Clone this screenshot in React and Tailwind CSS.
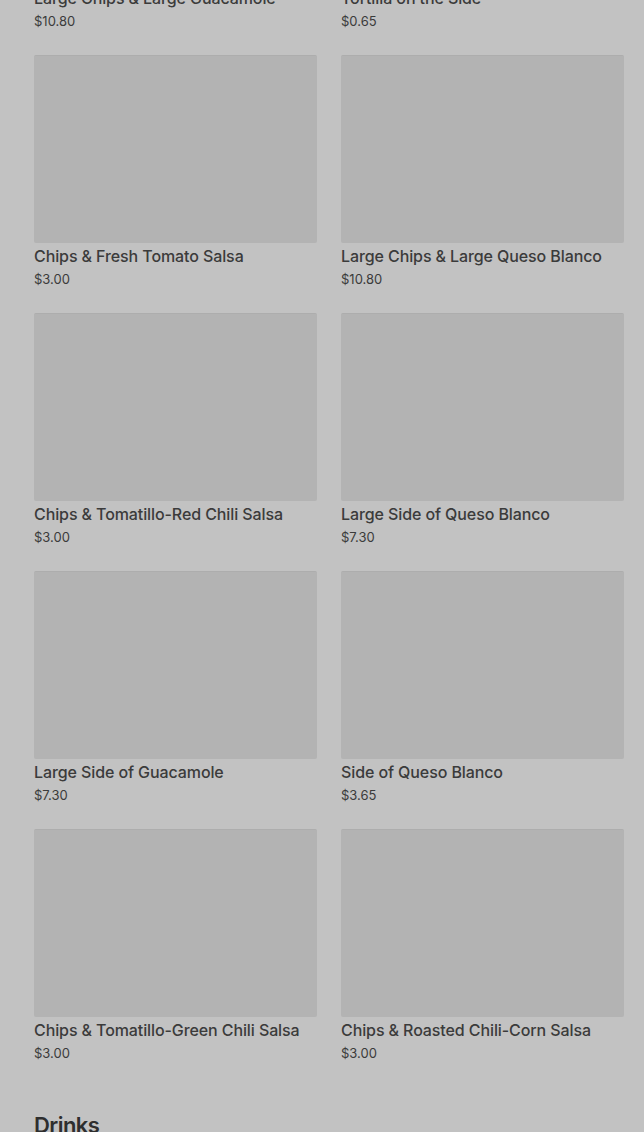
const items = [
  { name: "Large Chips & Large Guacamole", price: "$10.80" },
  { name: "Tortilla on the Side", price: "$0.65" },
  { name: "Chips & Fresh Tomato Salsa", price: "$3.00" },
  { name: "Large Chips & Large Queso Blanco", price: "$10.80" },
  { name: "Chips & Tomatillo-Red Chili Salsa", price: "$3.00" },
  { name: "Large Side of Queso Blanco", price: "$7.30" },
  { name: "Large Side of Guacamole", price: "$7.30" },
  { name: "Side of Queso Blanco", price: "$3.65" },
  { name: "Chips & Tomatillo-Green Chili Salsa", price: "$3.00" },
  { name: "Chips & Roasted Chili-Corn Salsa", price: "$3.00" },
];

function MenuItem({ name, price }) {
  return (
    <div className="flex flex-col">
      <div className="h-[188px] bg-[#b3b3b3] rounded-[2px] border-t border-[#adadad]" />
      <div className="mt-px text-[16px] leading-6 font-medium tracking-[-0.1px] text-[#3b3b3b] whitespace-nowrap">
        {name}
      </div>
      <div className="text-[13px] leading-[22px] text-[#3b3b3b]">{price}</div>
    </div>
  );
}

export default function App() {
  return (
    <div className="h-[1132px] bg-[#c2c2c2] overflow-hidden font-['Inter',sans-serif]">
      <div className="pl-[34px] pr-[20px] mt-[-203px]">
        <div className="grid grid-cols-2 gap-x-6 gap-y-[23px]">
          {items.map((item) => (
            <MenuItem key={item.name} {...item} />
          ))}
        </div>
        <h2 className="mt-[47px] text-[22px] leading-7 font-semibold tracking-tight text-[#2e2e2e]">
          Drinks
        </h2>
      </div>
    </div>
  );
}
